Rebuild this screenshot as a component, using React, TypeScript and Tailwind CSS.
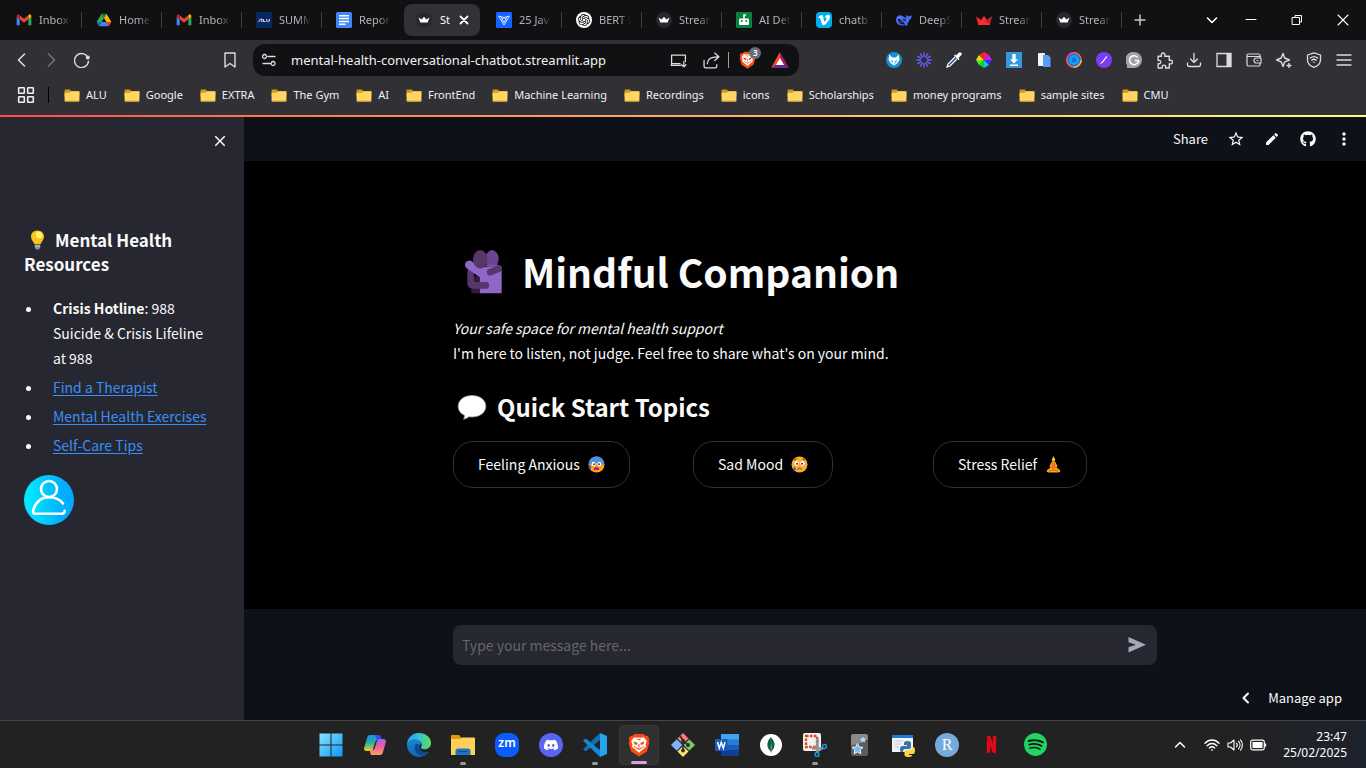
import React from "react";
import type { ReactNode } from "react";
import { SiDiscord, SiMongodb, SiNetflix, SiSpotify, SiVimeo, SiOpenai } from "react-icons/si";
import { MdStarBorder, MdEdit, MdMoreVert, MdClose } from "react-icons/md";
import { FaGithub } from "react-icons/fa";

/* ---------- favicons ---------- */

const Gmail = () => (
  <svg viewBox="0 0 24 24" className="size-4">
    <path d="M2 20h3.500V11L1 7.500V19a1 1 0 0 0 1 1z" fill="#4285f4" />
    <path d="M18.500 20H22a1 1 0 0 0 1-1V7.500L18.500 11z" fill="#34a853" />
    <path d="M18.500 5v6L23 7.500V6c0-2-2.300-3-3.800-1.800z" fill="#fbbc04" />
    <path d="M5.500 11V5l6.500 5 6.500-5v6L12 16z" fill="#ea4335" />
    <path d="M1 6v1.500L5.500 11V5l-.7-.8C3.300 3 1 4 1 6z" fill="#c5221f" />
  </svg>
);

const Drive = () => (
  <svg viewBox="0 0 24 24" className="size-4">
    <path d="M8.300 2.500h7.400L12 9z" fill="#188038" />
    <path d="M8.300 2.500 1 15l3.800 6.300L12 9z" fill="#34a853" />
    <path d="M15.700 2.500 12 9l3.700 6H23z" fill="#fbbc04" />
    <path d="M8.300 15h7.400l3.500 6.300H4.800z" fill="#4285f4" />
    <path d="M15.700 15H23l-3.800 6.300z" fill="#ea4335" />
    <path d="M1 15h7.300l-3.500 6.300z" fill="#1967d2" />
  </svg>
);

const Alu = () => (
  <svg viewBox="0 0 16 16" className="size-4">
    <rect width="16" height="16" fill="#05285f" />
    <path d="M2.500 10 4.800 7h1V10M7.300 7v2.500H9.300M10.800 7v2.500h2.400V7" fill="none" stroke="#e9edf5" strokeWidth="1" />
    <path d="M2.500 7.200h2.300M10.800 9.800h2.400" stroke="#e0344c" strokeWidth="1" />
  </svg>
);

const Docs = () => (
  <svg viewBox="0 0 16 16" className="size-4">
    <rect width="16" height="16" rx="1.500" fill="#4285f4" />
    <path d="M3 3.800h10M3 6.600h10M3 9.400h10M3 12.200h6.500" stroke="#fff" strokeWidth="1.500" />
  </svg>
);

const crown = "M2.500 5.500 5.700 7.500 8 4.800l2.300 2.700L13.500 5.500l-1.800 5H4.300z";

const Streamlit = () => (
  <svg viewBox="0 0 16 16" className="size-4">
    <circle cx="8" cy="8" r="8" fill="#262730" />
    <path d={crown} fill="#fff" />
  </svg>
);

const RedCrown = () => (
  <svg viewBox="0 0 16 16" className="size-4">
    <path d="M0 4.500 5 8l3-4 3 4 5-3.500L13.500 13h-11z" fill="#ff2b2b" />
    <path d="M11 8l5-3.500L13.500 13 8 9.500z" fill="#b32832" />
    <path d="M2 11.500 8 9.500l6 2-.5 1.500h-11z" fill="#ff2b2b" />
  </svg>
);

const Jav = () => (
  <svg viewBox="0 0 16 16" className="size-4">
    <rect width="16" height="16" rx="1" fill="#1463ff" />
    <path d="M2.500 4 8 5.500 13.500 4 8 13zM5 5l3 5.500L11 5M5 9l3-3.500L11 9" fill="none" stroke="#d4e3ff" strokeWidth="1" />
  </svg>
);

const Gpt = () => (
  <span className="flex size-4 items-center justify-center rounded-full bg-white text-black">
    <SiOpenai className="size-3" />
  </span>
);

const Robot = () => (
  <svg viewBox="0 0 16 16" className="size-4">
    <rect width="16" height="16" rx="1" fill="#0b8043" />
    <rect x="3" y="6.500" width="10" height="6.500" rx="1" fill="#fff" />
    <path d="M8 6.500V3h2" stroke="#fff" strokeWidth="1.600" fill="none" />
    <circle cx="5.800" cy="9" r="1" fill="#0b8043" />
    <circle cx="10.200" cy="9" r="1" fill="#0b8043" />
  </svg>
);

const Vimeo = () => (
  <span className="flex size-4 items-center justify-center rounded-sm bg-[#00adef] text-white">
    <SiVimeo className="size-3" />
  </span>
);

const Whale = () => (
  <svg viewBox="0 0 16 16" className="size-4">
    <path
      d="M0 8c0-3.200 2.300-5 5-4.600C7.300 3.800 8.800 5.500 10 6.500c.4-1-.6-2.200 0-3.700.8 1.500 2 1.800 3 1.500.8-.3 1.600-.9 2.600-.8.3 2.300-.8 3.700-2.300 4.300-.3 2-1.300 3.300-2.300 4.200l1.300 1c-1.200.7-2.300.6-3.600-.1C4.500 14.700 0 12 0 8z"
      fill="#4d6bfe"
    />
    <path d="M2.500 7.500c2 0 4 2.500 5.500 4.300-2.500.7-5-1.300-5.500-4.300zM7 7.500c1.500-.4 2.500.7 2.500 2" fill="none" stroke="#111113" strokeWidth="1.200" />
  </svg>
);

/* ---------- line icons ---------- */

function Line({ d, className = "size-4", w = 1.3, box = "0 0 16 16" }: { d: string; className?: string; w?: number; box?: string }) {
  return (
    <svg viewBox={box} className={className} fill="none" stroke="currentColor" strokeWidth={w} strokeLinecap="round" strokeLinejoin="round">
      <path d={d} />
    </svg>
  );
}

const BraveMark = ({ className }: { className: string }) => (
  <svg viewBox="0 0 24 26" className={className}>
    <path d="M7 1h10l2.300 2.200 2-.3 2 3.300-.8 2 .8 2.500-2.800 9.300L12 25.500l-8.500-5.500L.7 10.700l.8-2.500-.8-2 2-3.300 2 .3z" fill="#fb4b12" />
    <path d="m6.800 4.500 3 .7L12 4.800l2.200.4 3-.7 3.300 4.200-1.300 4 .3 2.600-3.800 3L12 21.500l-3.700-3.200-3.800-3 .3-2.600-1.300-4z" fill="#fff" />
    <path d="M6 9.300 10.600 10.500 10 13l-3-.9zM18 9.300l-4.600 1.200.6 2.500 3-.9z" fill="#fb4b12" />
    <path d="M10.300 6.500 12 7.500l1.700-1M12 12v3.500M9 16l3 1.700 3-1.700M7 14.500l1 1.500M17 14.500 16 16" fill="none" stroke="#fb4b12" strokeWidth="1.200" />
  </svg>
);

/* ---------- tab strip ---------- */

type Tab = { title: string; icon: ReactNode; active?: boolean; rule?: boolean };

const tabs: Tab[] = [
  { title: "Inbox", icon: <Gmail />, rule: true },
  { title: "Home", icon: <Drive />, rule: true },
  { title: "Inbox", icon: <Gmail />, rule: true },
  { title: "SUMM", icon: <Alu />, rule: true },
  { title: "Repor", icon: <Docs /> },
  { title: "St", icon: <Streamlit />, active: true },
  { title: "25 Jav", icon: <Jav />, rule: true },
  { title: "BERT I", icon: <Gpt />, rule: true },
  { title: "Stream", icon: <Streamlit />, rule: true },
  { title: "AI Det", icon: <Robot />, rule: true },
  { title: "chatb", icon: <Vimeo />, rule: true },
  { title: "DeepS", icon: <Whale />, rule: true },
  { title: "Stream", icon: <RedCrown />, rule: true },
  { title: "Stream", icon: <Streamlit />, rule: true },
];

function TabStrip() {
  return (
    <div className="flex h-10 items-center bg-[#111113] pl-[2px] text-[#b4b4b8]">
      {tabs.map((t, i) => (
        <div key={i} className="flex h-10 w-20 shrink-0 items-center">
          <div className={t.active ? "mx-[2px] flex h-8 flex-1 items-center rounded-lg bg-[#323236] pl-3 text-white" : "flex h-8 flex-1 items-center pl-[14px]"}>
            {t.icon}
            <span
              className={
                t.active
                  ? "ml-2 w-2.5 overflow-hidden text-[11px] leading-4 whitespace-nowrap"
                  : "ml-[7px] w-8 overflow-hidden text-[11px] leading-4 whitespace-nowrap [mask-image:linear-gradient(to_right,black_60%,transparent)]"
              }
            >
              {t.title}
            </span>
            {t.active && (
              <button aria-label="Close tab" className="ml-2 flex size-3 items-center justify-center">
                <Line d="M4.500 4.500l7 7M11.500 4.500l-7 7" w={1.8} className="size-4 shrink-0" />
              </button>
            )}
          </div>
          {t.rule && <span className="h-4 w-px bg-[#3e3e42]" />}
        </div>
      ))}
      <button aria-label="New tab" className="ml-2 flex size-5 items-center justify-center text-[#c8c8cc]">
        <Line d="M8 3v10M3 8h10" w={1.5} />
      </button>
      <div className="ml-auto flex text-white">
        <button aria-label="Search tabs" className="flex w-8 items-center justify-center">
          <Line d="M3.500 6 8 10.500 12.500 6" w={1.6} />
        </button>
        <button aria-label="Minimize" className="flex h-10 w-[46px] items-center justify-center">
          <Line d="M3 7.500h10" w={1} />
        </button>
        <button aria-label="Restore" className="flex h-10 w-[46px] items-center justify-center">
          <Line d="M3.500 5.500h7v7h-7zM6 5.500v-2h6.500V10h-2" w={1} />
        </button>
        <button aria-label="Close" className="flex h-10 w-[46px] items-center justify-center">
          <Line d="M3 3l10 10M13 3 3 13" w={1.1} />
        </button>
      </div>
    </div>
  );
}

/* ---------- toolbar ---------- */

const extensions: { label: string; icon: ReactNode }[] = [
  {
    label: "MetaMask",
    icon: (
      <svg viewBox="0 0 16 16" className="size-4">
        <circle cx="8" cy="8" r="8" fill="#1292d4" />
        <path d="M3.200 2.500 6.300 5.500h3.400l3.100-3 .7 5.500L11 11.500 8 13.500 5 11.500 2.500 8z" fill="#fff" />
        <path d="M4.500 8 7 9.300 6.500 11zM11.500 8 9 9.300l.5 1.700z" fill="#1292d4" />
        <path d="M8 9.500v4l3-2z" fill="#b9def3" />
      </svg>
    ),
  },
  {
    label: "Loom",
    icon: (
      <svg viewBox="0 0 16 16" className="size-4" stroke="#625df5" strokeWidth="1.500" fill="none">
        <path d="M11 8h4.800M10.600 9.500l4.100 2.400M9.500 10.600l2.400 4.100M8 11v4.800M6.500 10.600l-2.400 4.100M5.400 9.500l-4.100 2.400M5 8H.2M5.400 6.500 1.300 4.100M6.500 5.400 4.100 1.300M8 5V.2M9.500 5.400l2.400-4.100M10.600 6.500l4.100-2.400" />
      </svg>
    ),
  },
  {
    label: "Colour picker",
    icon: (
      <svg viewBox="0 0 16 16" className="size-4">
        <path d="M9 5 2 12l-1 3 3-1 7-7" fill="#2b4bb8" stroke="#fff" strokeWidth="1.200" />
        <path d="m8 3.500 4.500 4.500 1-1-1-1 2.700-2.700a1.600 1.600 0 0 0-2.500-2.500L10 3.500l-1-1z" fill="#fff" />
      </svg>
    ),
  },
  {
    label: "Colour wheel",
    icon: (
      <svg viewBox="0 0 16 16" className="size-4">
        <path d="M8 8V0l5 3z" fill="#f0206a" />
        <path d="M8 8l5-5 3 5z" fill="#d61cf0" />
        <path d="M8 8h8l-3 5z" fill="#3030f0" />
        <path d="M8 8l5 5-5 3z" fill="#10c8e8" />
        <path d="M8 8v8l-5-3z" fill="#10c838" />
        <path d="M8 8l-5 5-3-5z" fill="#60e818" />
        <path d="M8 8H0l3-5z" fill="#f0e010" />
        <path d="M8 8 3 3l5-3z" fill="#f02818" />
      </svg>
    ),
  },
  {
    label: "Downloader",
    icon: (
      <svg viewBox="0 0 16 16" className="size-4">
        <rect width="16" height="16" fill="#3498db" />
        <path d="M6.300 2h3.400v5.500H12L8 11.500 4 7.500h2.300zM4 12.500h8V14H4z" fill="#fff" />
      </svg>
    ),
  },
  {
    label: "Copy",
    icon: (
      <svg viewBox="0 0 16 16" className="size-4">
        <rect x="2" y="1" width="7" height="13" rx="1" fill="#f4f7fc" />
        <path d="M7 3h5l2.500 2.500V15H7z" fill="#5a9df5" />
      </svg>
    ),
  },
  {
    label: "Lens",
    icon: (
      <svg viewBox="0 0 16 16" className="size-4">
        <circle cx="8" cy="8" r="7.200" fill="#1173d8" stroke="#ff6a4d" strokeWidth="1.400" />
        <path d="M8 .8A7.200 7.200 0 0 0 .8 8" fill="none" stroke="#f0389a" strokeWidth="1.400" />
        <path d="M15.200 8A7.200 7.200 0 0 1 8 15.200" fill="none" stroke="#ffb637" strokeWidth="1.400" />
        <circle cx="8" cy="8" r="5" fill="#13a4f5" />
        <circle cx="8" cy="8" r="2.500" fill="#0a7ad6" />
      </svg>
    ),
  },
  {
    label: "Pen",
    icon: (
      <svg viewBox="0 0 16 16" className="size-4">
        <circle cx="8" cy="8" r="8" fill="#7b3ff2" />
        <path d="m5 11.500 5.500-7 .5.500zM8.500 8 5 11.500" fill="#fff" stroke="#fff" strokeWidth=".7" />
      </svg>
    ),
  },
  {
    label: "Grammarly",
    icon: (
      <svg viewBox="0 0 16 16" className="size-4">
        <path d="M8 0a8 8 0 1 1 0 16H1V13A8 8 0 0 1 8 0z" fill="#a3a3a3" />
        <path d="M11.500 5.300a4.500 4.500 0 1 0 1 3.200H9M12.500 8.500V11" fill="none" stroke="#fff" strokeWidth="1.500" />
      </svg>
    ),
  },
  { label: "Extensions", icon: <Line d="M2 4h3.200C4.600 2 5.500 1 6.700 1s2.100 1 1.500 3h4.300v4C14.500 7.300 15.500 8.200 15.500 9.400s-1 2.200-3 1.600v4H9c.4-1.900-.4-2.700-1.600-2.700S5.500 13.100 6 15H2v-4c1.700.4 2.400-.5 2.400-1.500S3.700 7.500 2 8z" w={1.3} className="size-[17px]" /> },
  { label: "Downloads", icon: <Line d="M8 1.500v9M4.500 7 8 10.500 11.500 7M1.500 11v1.500a2 2 0 0 0 2 2h9a2 2 0 0 0 2-2V11" /> },
  {
    label: "Sidebar",
    icon: (
      <svg viewBox="0 0 16 16" className="size-4">
        <path d="M1 1.500h14v13H1z" fill="none" stroke="currentColor" strokeWidth="1.300" />
        <path d="M10.500 1.500H15v13h-4.500z" fill="currentColor" />
      </svg>
    ),
  },
  { label: "Wallet", icon: <Line d="M14 5V3.500a1.500 1.500 0 0 0-1.500-1.500h-10A1.500 1.500 0 0 0 1 3.500v9A1.500 1.500 0 0 0 2.500 14h10a1.500 1.500 0 0 0 1.500-1.500V11M1 4.500h13.500M15 6h-4.500a2.500 2.500 0 0 0 0 5H15zM11 8.500h1" w={1.2} /> },
  { label: "AI assistant", icon: <Line d="M7 1.500 8.700 6 13.500 8 8.700 9.800 7 14.500 5.200 9.800.5 8l4.700-2zM13 11.500v4M11 13.500h4" w={1.4} /> },
  { label: "VPN", icon: <Line d="M8 .8 14.500 3v5c0 4-3 6-6.500 7.300C4.500 14 1.500 12 1.500 8V3zM4.300 6c2.300-1.800 5-1.800 7.400 0M5.700 8.200c1.500-1.200 3.100-1.200 4.600 0M7.800 10.200h.4" w={1.3} /> },
  { label: "Menu", icon: <Line d="M1 3h14M1 8h14M1 13h14" w={1.3} /> },
];

function Toolbar() {
  return (
    <div className="flex h-10 items-center bg-[#313135] text-[#dcdce0]">
      <div className="flex w-[244px] items-center pl-[14px]">
        <button aria-label="Back" className="mr-[13px]"><Line d="M10.500 2 4.500 8l6 6" w={1.6} /></button>
        <button aria-label="Forward" className="mr-[15px] text-[#77777b]"><Line d="M5.500 2l6 6-6 6" w={1.4} /></button>
        <button aria-label="Reload">
          <svg viewBox="0 0 16 16" className="size-4">
            <path d="M13.800 5.500A7 7 0 1 0 14.500 8.700" fill="none" stroke="currentColor" strokeWidth="1.400" />
            <circle cx="13.800" cy="5.600" r="2" fill="currentColor" />
          </svg>
        </button>
        <button aria-label="Bookmark this tab" className="mr-1.5 ml-auto"><Line d="M3 1h10v14l-5-3.500L3 15z" w={1.4} /></button>
      </div>
      <div className="ml-[9px] flex h-8 w-2/5 items-center rounded-xl bg-[#111113] pr-2.5 pl-2">
        <Line d="M7 4.500h7M3.500 2.500a2 2 0 1 0 .1 0M12 9.500a2 2 0 1 0 .1 0M2 11.500h7" w={1.3} />
        <input aria-label="Address" defaultValue="mental-health-conversational-chatbot.streamlit.app" className="ml-[14px] min-w-0 flex-1 bg-transparent text-[13px] leading-5 text-[#f0f0f4] outline-none" />
        <button aria-label="Install app" className="mr-4"><Line d="M10 12.500H1M1.500 12.500V3h13v6M1.500 11H9.500M13 9v5M11 12l2 2 2-2" w={1.2} className="size-[17px]" /></button>
        <button aria-label="Share page" className="mr-2"><Line d="M1 8v5.500A1.500 1.500 0 0 0 2.500 15h9a1.500 1.500 0 0 0 1.500-1.500V12M4 11c.3-4 3-6.500 9.500-6.500M11 1l4 3.500L11 8" w={1.2} className="size-[17px]" /></button>
        <span className="h-4 w-px bg-[#a0a0a4]" />
        <button aria-label="Brave shields" className="relative ml-[10px]">
          <BraveMark className="h-[18px] w-[17px]" />
          <span className="absolute -top-1 left-2.5 flex size-3 items-center justify-center rounded-full bg-[#686d7d] text-[8px] leading-3 font-semibold text-white">3</span>
        </button>
        <button aria-label="Brave rewards" className="ml-[15px]">
          <svg viewBox="0 0 18 16" className="h-4 w-[18px]">
            <path d="M9 0v6.500L5 13l-5 3z" fill="#ff4a20" />
            <path d="m9 0 9 16-5-3-4-6.500z" fill="#9e1f63" />
            <path d="m0 16 5-3h8l5 3z" fill="#662d91" />
            <path d="m9 6 4.200 7H4.800z" fill="#fff" />
          </svg>
        </button>
      </div>
      <div className="ml-auto flex pr-[7px]">
        {extensions.map((e) => (
          <button key={e.label} aria-label={e.label} className="flex h-8 w-[30px] items-center justify-center">{e.icon}</button>
        ))}
      </div>
    </div>
  );
}

/* ---------- bookmarks ---------- */

const bookmarks = ["ALU", "Google", "EXTRA", "The Gym", "AI", "FrontEnd", "Machine Learning", "Recordings", "icons", "Scholarships", "money programs", "sample sites", "CMU"];

function Bookmarks() {
  return (
    <nav aria-label="Bookmarks" className="flex h-[35px] items-center bg-[#313135] pb-[5px] pl-[17px] text-[#f0f0f2]">
      <button aria-label="All bookmarks">
        <Line d="M2 1.500h4a.5.500 0 0 1 .5.500v4a.5.500 0 0 1-.5.500H2a.5.500 0 0 1-.5-.5V2a.5.500 0 0 1 .5-.5zM10 1.500h4a.5.500 0 0 1 .5.500v4a.5.500 0 0 1-.5.500h-4a.5.500 0 0 1-.5-.5V2a.5.500 0 0 1 .5-.5zM2 9.500h4a.5.500 0 0 1 .5.500v4a.5.500 0 0 1-.5.500H2a.5.500 0 0 1-.5-.5v-4a.5.500 0 0 1 .5-.5zM10 9.500h4a.5.500 0 0 1 .5.500v4a.5.500 0 0 1-.5.500h-4a.5.500 0 0 1-.5-.5v-4a.5.500 0 0 1 .5-.5z" w={1.4} className="size-[18px]" />
      </button>
      <span className="mr-[15px] ml-[13px] h-4 w-px bg-black" />
      <ul className="flex gap-[17px]">
        {bookmarks.map((b) => (
          <li key={b}>
            <a href="#" className="flex items-center gap-1.5 text-[11px] leading-4 whitespace-nowrap">
              <svg viewBox="0 0 16 14" className="h-[13px] w-4">
                <path d="M0 1.500A1 1 0 0 1 1 .5h4.500l1.800 2H16V8H0z" fill="#d39a17" />
                <path d="M0 4h5.500l1.500-1.500h8.300a.7.700 0 0 1 .7.700V12.500a1 1 0 0 1-1 1H1a1 1 0 0 1-1-1z" fill="#ffd663" />
                <path d="M0 12.500h16a1 1 0 0 1-1 1H1a1 1 0 0 1-1-1z" fill="#e8ac2e" />
              </svg>
              {b}
            </a>
          </li>
        ))}
      </ul>
    </nav>
  );
}

/* ---------- emoji drawings ---------- */

const Bulb = () => (
  <svg viewBox="0 0 27 20" className="mr-1 inline-block h-5 w-[27px] align-[-3px]">
    <path d="M13.500.5c4 0 6.500 2.800 6.500 6.200 0 3-2.300 4.300-3.300 7.300h-6.400C9.300 11 7 9.700 7 6.700 7 3.300 9.500.5 13.500.5z" fill="#fcc21b" />
    <path d="M14.500 1.500c2.500.3 4 2 4 4.200 0 1.800-1.500 2.800-3.500 2.600-2-.3-3.500-2-3.300-3.900.2-1.600 1.300-3 2.800-2.900z" fill="#fff37a" />
    <path d="M10.800 14.500h5.400v3.300l-1.500 1.700h-2.400l-1.500-1.700z" fill="#8d9499" />
    <path d="M10.800 16h5.400" stroke="#c4c9cc" />
  </svg>
);

const Hug = () => (
  <svg viewBox="72 58 118 136" className="h-[45px] w-[39px]" strokeLinecap="round" fill="none">
    <ellipse cx="157" cy="88" rx="20" ry="27" fill="#6b4391" />
    <path d="M94 140h26v52H94z" fill="#321b41" />
    <path d="M108 112h66a12 12 0 0 1 12 12v68h-66v-50z" fill="#8f67c9" />
    <path d="M92 128v32q0 8 8 8h38" stroke="#563769" strokeWidth="20" />
    <path d="M88 106l44 30" stroke="#8f67c9" strokeWidth="26" />
    <path d="M140 108h34q8 0 10 6" stroke="#7953ab" strokeWidth="5" />
    <path d="M151 128l25-10" stroke="#563769" strokeWidth="20" />
    <ellipse cx="121" cy="89" rx="22" ry="28" fill="#563769" />
  </svg>
);

const Bubble = () => (
  <svg viewBox="0 0 30 25" className="h-[25px] w-[30px]">
    <path d="M15 .5C23 .5 28.800 5 28.800 11.200S23 22 15 22c-1 0-2-.1-3-.2-1.500 1.200-3.200 2-5.400 2.500.7-1.400 1-2.600.8-4.100C3.500 18.500 1.200 15.300 1.200 11.200 1.200 5 7 .5 15 .5z" fill="#fff" stroke="#9a9a9a" strokeWidth=".8" />
  </svg>
);

const Anxious = () => (
  <svg viewBox="0 0 17 17" className="size-[17px]">
    <circle cx="8.500" cy="8.500" r="8" fill="#fca321" />
    <path d="M.8 8.500a7.700 8 0 0 1 15.400 0c-2 .5-3.500-1-7.700-1S3 9 .8 8.500z" fill="#4a8ff0" />
    <ellipse cx="5.600" cy="8" rx="2" ry="2.200" fill="#fff" />
    <ellipse cx="11.400" cy="8" rx="2" ry="2.200" fill="#fff" />
    <circle cx="6" cy="8.200" r=".9" fill="#402a32" />
    <circle cx="11" cy="8.200" r=".9" fill="#402a32" />
    <path d="M5.800 14c0-2.300 1-3 2.700-3s2.700.7 2.700 3z" fill="#bb1d80" />
    <path d="M1.500 9c-1.200 1.500-1.200 4 .5 4s1.500-2.500-.5-4z" fill="#3855e8" />
  </svg>
);

const Crying = () => (
  <svg viewBox="0 0 17 17" className="size-[17px]">
    <circle cx="8.500" cy="8.500" r="8" fill="#fcab2b" />
    <ellipse cx="5.600" cy="7.500" rx="2.200" ry="2.400" fill="#fff" />
    <ellipse cx="11.400" cy="7.500" rx="2.200" ry="2.400" fill="#fff" />
    <circle cx="6" cy="7.700" r="1" fill="#402a32" />
    <circle cx="11" cy="7.700" r="1" fill="#402a32" />
    <path d="M6.500 13.500c1-1.500 3-1.500 4 0M3 4.200l2.500-1.400M14 4.200l-2.500-1.400" stroke="#5c3420" fill="none" />
    <path d="M3.500 10.500c-1.600 1.800-1.500 4.200.1 4.200s1.500-2.400-.1-4.200z" fill="#3855e8" />
  </svg>
);

const Yoga = () => (
  <svg viewBox="0 0 17 17" className="size-[17px]">
    <path d="M8.500 0 9.600 2.500v3H7.400v-3z" fill="#fcc21b" />
    <circle cx="8.500" cy="3.800" r="1.700" fill="#fcc21b" />
    <path d="M6.800 5.800h3.400L12.500 10l-1 1.500 3.700 2.800c.3 1.400-.4 2.200-2.200 2.200H4c-1.800 0-2.500-.8-2.200-2.200l3.700-2.800-1-1.500z" fill="#f9a31b" />
    <path d="M7.200 7h2.600l1 4.500-2.300 1.700-2.300-1.700z" fill="#f26a2a" />
    <path d="M4 14.800c2.500-1 6.500-1 9 0" stroke="#c76a10" fill="none" />
  </svg>
);

const Avatar = () => (
  <svg viewBox="0 0 50 50" className="size-[50px]" role="img" aria-label="User">
    <defs>
      <linearGradient id="avatar" x1="0" x2="1">
        <stop offset="0" stopColor="#00efff" />
        <stop offset=".75" stopColor="#00b0ff" />
        <stop offset="1" stopColor="#00a8ff" />
      </linearGradient>
    </defs>
    <circle cx="25" cy="25" r="25" fill="url(#avatar)" />
    <g fill="none" stroke="#fff" strokeWidth="2.600" strokeLinecap="round">
      <circle cx="25" cy="14" r="8" />
      <path d="M39 28.500C36 24.500 31 22.300 25 22.300c-8 0-13.500 5-15.700 13-.6 2.200 0 3.400 1.800 3.400h26.500c2 0 3.200-1 3-3" />
    </g>
  </svg>
);

/* ---------- app ---------- */

function Sidebar() {
  const link = "text-[#3a8ff5] underline underline-offset-2";
  return (
    <aside className="flex w-[244px] shrink-0 flex-col bg-[#262730] px-6 text-[#fafafa]">
      <div className="-mr-3 flex h-12 items-center justify-end">
        <button aria-label="Close sidebar" className="flex size-6 items-center justify-center">
          <MdClose className="size-[18px]" />
        </button>
      </div>
      <h3 className="mt-[63px] text-[17px] leading-6 font-semibold">
        <Bulb />
        Mental Health Resources
      </h3>
      <ul className="mt-5 flex flex-col gap-1 pr-2 text-[14px] leading-[25px]">
        {[
          <React.Fragment key="t"><strong className="font-semibold">Crisis Hotline</strong>: 988 Suicide &amp; Crisis Lifeline at 988</React.Fragment>,
          <a key="a" href="#" className={link}>Find a Therapist</a>,
          <a key="b" href="#" className={link}>Mental Health Exercises</a>,
          <a key="c" href="#" className={link}>Self-Care Tips</a>,
        ].map((item, i) => (
          <li key={i} className="flex">
            <span className="mt-[11px] mr-[22px] ml-[2px] size-[5px] shrink-0 rounded-full bg-[#fafafa]" />
            <span>{item}</span>
          </li>
        ))}
      </ul>
      <div className="mt-[17px]"><Avatar /></div>
    </aside>
  );
}

const topics = [
  { label: "Feeling Anxious", icon: <Anxious /> },
  { label: "Sad Mood", icon: <Crying /> },
  { label: "Stress Relief", icon: <Yoga /> },
];

function Main() {
  return (
    <div className="flex min-w-0 flex-1 flex-col bg-black text-[#fafafa]">
      <header className="flex h-11 items-center justify-end gap-3 bg-[#0e1117] pr-[10px]">
        <button className="mr-1 text-[13px] leading-5">Share</button>
        <button aria-label="Favourite" className="flex size-6 items-center justify-center"><MdStarBorder className="size-[18px]" /></button>
        <button aria-label="Edit" className="flex size-6 items-center justify-center"><MdEdit className="size-4" /></button>
        <button aria-label="View source" className="flex size-6 items-center justify-center"><FaGithub className="size-4" /></button>
        <button aria-label="More" className="flex size-6 items-center justify-center"><MdMoreVert className="size-5" /></button>
      </header>
      <main className="mx-auto w-full max-w-[704px] flex-1 pt-[84px]">
        <h1 className="flex items-center gap-2 text-[39px] leading-[53px] font-bold">
          <span className="flex w-[61px] justify-center"><Hug /></span>
          Mindful Companion
        </h1>
        <p className="mt-[18px] text-[14px] leading-[25px]">
          <em>Your safe space for mental health support</em>
          <br />
          I'm here to listen, not judge. Feel free to share what's on your mind.
        </p>
        <h3 className="mt-6 flex items-center gap-1.5 text-[24px] leading-[34px] font-semibold">
          <span className="flex w-[38px] justify-center"><Bubble /></span>
          Quick Start Topics
        </h3>
        <div className="mt-[17px] grid grid-cols-3 gap-4">
          {topics.map((t) => (
            <div key={t.label}>
              <button className="flex h-[47px] items-center gap-2 rounded-[20px] border border-[#303032] px-6 text-[14px] leading-[25px]">
                {t.label}
                {t.icon}
              </button>
            </div>
          ))}
        </div>
      </main>
      <footer className="bg-[#0e1117] pt-4">
        <form className="mx-auto flex h-10 w-full max-w-[704px] items-center rounded-lg bg-[#262730] pr-2.5 pl-[9px]" onSubmit={(e) => e.preventDefault()}>
          <input aria-label="Message" placeholder="Type your message here..." className="min-w-0 flex-1 bg-transparent text-[14px] leading-6 outline-none placeholder:text-[#65666f]" />
          <button aria-label="Send">
            <svg viewBox="0 0 20 20" className="size-5">
              <path d="M1.500 2 19 9.800 1.500 17.500v-5.300L9 9.800 1.500 7.300z" fill="#a3a8b8" />
            </svg>
          </button>
        </form>
        <div className="flex justify-end pt-5 pr-6 pb-2.5">
          <button className="flex items-center gap-[14px] text-[13px] leading-[25px]">
            <Line d="M10 3.500 5.500 8l4.500 4.500" w={2} />
            Manage app
          </button>
        </div>
      </footer>
    </div>
  );
}

/* ---------- taskbar ---------- */

const apps: { label: string; icon: ReactNode; state?: "open" | "active" }[] = [
  {
    label: "Start",
    icon: (
      <svg viewBox="0 0 24 24" className="size-6">
        <defs><linearGradient id="win" x2="1" y2="1"><stop stopColor="#8be4ff" /><stop offset="1" stopColor="#0c98f5" /></linearGradient></defs>
        <path d="M.5.5h11v11H.5zM12.500.5h11v11h-11zM.5 12.500h11v11H.5zM12.500 12.500h11v11h-11z" fill="url(#win)" />
      </svg>
    ),
  },
  {
    label: "Copilot",
    icon: (
      <svg viewBox="0 0 24 24" className="size-6">
        <defs>
          <linearGradient id="cp1" y2="1" x2="0"><stop stopColor="#1c90f0" /><stop offset=".5" stopColor="#27b0a0" /><stop offset="1" stopColor="#f5d01a" /></linearGradient>
          <linearGradient id="cp2" y2="1" x2="0"><stop stopColor="#a85cf0" /><stop offset=".5" stopColor="#f0609a" /><stop offset="1" stopColor="#ffa060" /></linearGradient>
        </defs>
        <path d="M7 2h9l1.500 5H15c-1.500 0-2.300.8-2.800 2.300L10 16c-.6 1.800-1.500 2-3 2H3.500C1.500 18 .6 16.500 1.200 14.500L4 5c.5-2 1.500-3 3-3z" fill="url(#cp1)" />
        <path d="M17 22H8l-1.500-5H9c1.500 0 2.300-.8 2.800-2.300L14 8c.6-1.800 1.500-2 3-2h3.500c2 0 2.900 1.500 2.300 3.500L20 19c-.5 2-1.500 3-3 3z" fill="url(#cp2)" />
        <path d="M12 2h3.500c1.500 0 2 .8 2.400 2l.6 2H17c-1.500 0-2.400.5-3 2-.6-3-1-4.500-2-6z" fill="#2257d8" />
      </svg>
    ),
  },
  {
    label: "Edge",
    icon: (
      <svg viewBox="0 0 24 24" className="size-6">
        <defs>
          <linearGradient id="edge"><stop stopColor="#27a5e8" /><stop offset=".5" stopColor="#30c4d8" /><stop offset="1" stopColor="#65dc58" /></linearGradient>
          <linearGradient id="edge-base" y2="1" x2="0"><stop stopColor="#1c8fe0" /><stop offset="1" stopColor="#1066b8" /></linearGradient>
        </defs>
        <path d="M12 0a12 12 0 1 0 9.800 18.900c-4 1.700-9.300.1-9.800-5.400l2-3L12 5z" fill="url(#edge-base)" />
        <path d="M9 10.500c-2.500 3.500-1.500 9 3 11.300 3.700 1.500 7.500.3 9.800-2.900-3 1.100-6.800.6-9-1.900-1.300-1.500-1.800-3.500-.8-5.500z" fill="#0c4a8f" />
        <path d="M0 11.500C.5 4.500 6 0 12 0c7 0 12 4.500 12 10 0 4-3 6.300-6.500 6.300-3 0-4-1.200-3.500-2.200.6-.9 1-1.900.6-3.400C13.800 8 11 6.300 8 6.300c-4 0-7 2.200-8 5.200z" fill="url(#edge)" />
      </svg>
    ),
  },
  {
    label: "File Explorer",
    state: "open",
    icon: (
      <svg viewBox="0 0 24 24" className="size-6">
        <path d="M0 3a1 1 0 0 1 1-1h7l2.500 3H23a1 1 0 0 1 1 1v5H0z" fill="#dd9d0e" />
        <path d="M0 6h9l2-1.500h12a1 1 0 0 1 1 1V22H0z" fill="#ffd058" />
        <path d="M4.500 22v-4a2.500 2.500 0 0 1 2.500-2.500h10a2.500 2.500 0 0 1 2.500 2.500v4z" fill="#1977c4" />
        <path d="M7.500 18.500h9" stroke="#0b4f8e" strokeWidth="1.200" />
      </svg>
    ),
  },
  { label: "Zoom", icon: <span className="flex size-6 items-center justify-center rounded-[9px] bg-[#0b5cff] pb-[3px] text-[12px] leading-4 font-semibold text-white">zm</span> },
  { label: "Discord", icon: <span className="flex size-6 items-center justify-center rounded-full bg-[#5865f2] text-white"><SiDiscord className="size-3.5" /></span> },
  {
    label: "Visual Studio Code",
    state: "open",
    icon: (
      <svg viewBox="0 0 24 24" className="size-6">
        <path d="m17 0 .5 6.500L3.500 18 1.800 18 0 16.300z" fill="#0e6fb5" />
        <path d="m17 24 .5-6.500L3.500 6H1.800L0 7.700z" fill="#1488d1" />
        <path d="m17 0 7 3v18l-7 3z" fill="#25a5ee" />
      </svg>
    ),
  },
  { label: "Brave", state: "active", icon: <BraveMark className="h-6 w-[22px]" /> },
  {
    label: "Git",
    icon: (
      <svg viewBox="0 0 24 24" className="size-6">
        <path d="m12 0 5.500 5.500L12 11 6.500 5.500z" fill="#f77b7b" />
        <path d="m5.800 6.200 5.500 5.800-5.500 5.800L0 12z" fill="#80b3ff" />
        <path d="m18.200 6.200L24 12l-5.800 5.800L12.700 12z" fill="#7bc96a" />
        <path d="m12 13 5.500 5.500L12 24l-5.500-5.500z" fill="#fbe277" />
        <path d="m9 3 3 4v11M12 7.500l5 4.500" stroke="#2b2b2b" strokeWidth="1.600" fill="none" />
        <circle cx="12" cy="17.500" r="1.900" fill="#2b2b2b" /><circle cx="17" cy="12" r="1.900" fill="#2b2b2b" /><circle cx="12" cy="8" r="1.900" fill="#2b2b2b" />
      </svg>
    ),
  },
  {
    label: "Word",
    icon: (
      <svg viewBox="0 0 24 24" className="size-6">
        <path d="M6 1h18v6H6z" fill="#41a5ee" /><path d="M6 6.500h18V12H6z" fill="#2b7cd3" />
        <path d="M6 12h18v5.500H6z" fill="#185abd" /><path d="M6 17.500h18V23H6z" fill="#103f91" />
        <rect y="6" width="12.500" height="12" rx="1" fill="#185abd" />
        <path d="M2.500 9 4.300 15.200 6.300 9.300l2 5.900L10 9" fill="none" stroke="#fff" strokeWidth="1.500" />
      </svg>
    ),
  },
  { label: "MongoDB Compass", icon: <span className="flex size-[22px] items-center justify-center rounded-full bg-white text-[#116149]"><SiMongodb className="size-4" /></span> },
  {
    label: "Snipping Tool",
    state: "open",
    icon: (
      <svg viewBox="0 0 24 24" className="size-6">
        <rect x="0" y="0" width="18" height="18" rx="2" fill="#f3f3f3" />
        <path d="M3 3h11v11H3z" fill="none" stroke="#e0441a" strokeWidth="2.400" strokeDasharray="2.600 1.300" />
        <path d="M14.500 5v10.500H20M9 15.500h5.500V20" fill="none" stroke="#8b929a" strokeWidth="2.600" />
        <circle cx="14" cy="21.500" r="2" fill="none" stroke="#1b9de2" strokeWidth="1.400" />
        <circle cx="21.500" cy="13.500" r="2" fill="none" stroke="#1b9de2" strokeWidth="1.400" />
      </svg>
    ),
  },
  {
    label: "Anki",
    icon: (
      <svg viewBox="0 0 24 24" className="size-6">
        <rect x="4" y="1" width="17" height="22" rx="2.500" fill="#5d5d5d" />
        <path d="M4 12c6 0 12-3 17-6V3.500A2.500 2.500 0 0 0 18.500 1h-12A2.500 2.500 0 0 0 4 3.500z" fill="#8a8a8a" />
        <path d="m10.500 10.500 1.700 3.400 3.800.5-2.800 2.600.7 3.800-3.400-1.900-3.400 1.900.7-3.800L5 14.400l3.800-.5z" fill="#6fbcf8" stroke="#e8f4ff" />
        <path d="m16 3.500 1 2 2.300.2-1.600 1.600.4 2.200-2.100-1-2.100 1 .4-2.200-1.600-1.600 2.300-.2z" fill="#b4dffc" />
      </svg>
    ),
  },
  {
    label: "Python IDLE",
    icon: (
      <svg viewBox="0 0 24 24" className="size-6">
        <path d="M1 2h21v17H1z" fill="#eef3f8" /><path d="M1 2h21v3H1z" fill="#1f7dd0" />
        <path d="M3.500 8h8M3.500 11h6M3.500 14h5" stroke="#b9c4cf" />
        <path d="M16.500 8c3 0 3.500 1 3.500 2.500V14c0 1.500-1 2-2.500 2h-3C13 16 12 17 12 19h-1.500C9 19 9 17.500 9 16s.5-3 2.500-3H16v-1h-3v-1.500C13 9 13.500 8 16.500 8z" fill="#3873a6" />
        <path d="M17 24c-3 0-3.500-1-3.500-2.500V19c0-1.500 1-2 2.500-2h3c1.500 0 2.500-1 2.500-3H22c1.600 0 2 1.500 2 3.500S23.500 21 22 21h-4v1h3c0 1.500-1 2-4 2z" fill="#ffd343" />
      </svg>
    ),
  },
  { label: "RStudio", icon: <span className="flex size-6 items-center justify-center rounded-full bg-[#75aadb] font-['Liberation_Serif',serif] text-[16px] leading-4 text-white">R</span> },
  { label: "Netflix", icon: <SiNetflix className="size-[17px] text-[#e50914]" /> },
  { label: "Spotify", icon: <span className="flex size-[22px] items-center justify-center rounded-full bg-[#151515] text-[#1ed760]"><SiSpotify className="size-[23px] shrink-0" /></span> },
];

function Taskbar() {
  return (
    <div className="grid h-12 grid-cols-[1fr_auto_1fr] items-center border-t border-[#444446] bg-linear-to-r from-[#222222] from-90% to-[#1c222d]">
      <div />
      <div className="flex">
        {apps.map((a) => (
          <button
            key={a.label}
            aria-label={a.label}
            className={
              a.state === "active"
                ? "relative mx-[2px] flex h-10 w-10 items-center justify-center rounded border border-[#3a3a3a] bg-[#303030]"
                : "relative flex h-10 w-11 items-center justify-center"
            }
          >
            {a.icon}
            {a.state === "open" && <span className="absolute bottom-0 h-[3px] w-1.5 rounded-full bg-[#9a9a9a]" />}
            {a.state === "active" && <span className="absolute bottom-0 h-[3px] w-4 rounded-full bg-[#d9a0e0]" />}
          </button>
        ))}
      </div>
      <div className="flex items-center justify-end pr-[19px] text-white">
        <button aria-label="Hidden icons" className="mr-4 flex w-4"><Line d="M3.500 10 8 5.500l4.500 4.500" w={1.5} /></button>
        <button aria-label="Network, volume and battery" className="mr-4 flex items-center gap-[7px]">
          <Line d="M1 6.200c4-4.300 10-4.300 14 0M3.200 8.700c2.800-2.900 6.800-2.900 9.600 0M5.400 11c1.500-1.600 3.700-1.600 5.200 0M7.700 13h.6" w={1.4} />
          <Line d="M1 6h2.500L7 3v10L3.500 10H1zM9.500 6c1 1.200 1 2.800 0 4M11.500 4.200c2 2.200 2 5.400 0 7.600M13.500 2.800c2.500 3 2.500 7.400 0 10.400" w={1.1} />
          <svg viewBox="0 0 17 12" className="h-3 w-[17px]">
            <rect x=".7" y="1.200" width="13.600" height="9.600" rx="1.800" fill="none" stroke="#fff" strokeWidth="1.200" />
            <rect x="2.500" y="3" width="10" height="6" fill="#fff" />
            <path d="M15.500 4.500v3" stroke="#fff" strokeWidth="1.400" />
          </svg>
        </button>
        <div className="text-right text-[12px] leading-4">
          <div>23:47</div>
          <div>25/02/2025</div>
        </div>
      </div>
    </div>
  );
}

export default function App() {
  return (
    <div className="flex min-h-screen flex-col bg-black font-['Noto_Sans','Open_Sans',sans-serif]">
      <TabStrip />
      <Toolbar />
      <Bookmarks />
      <div className="h-[2px] bg-linear-to-r from-[#ff4b4b] to-[#fffd80]" />
      <div className="flex flex-1 font-['Noto_Sans_CJK_SC','Noto_Sans',sans-serif]">
        <Sidebar />
        <Main />
      </div>
      <Taskbar />
    </div>
  );
}
